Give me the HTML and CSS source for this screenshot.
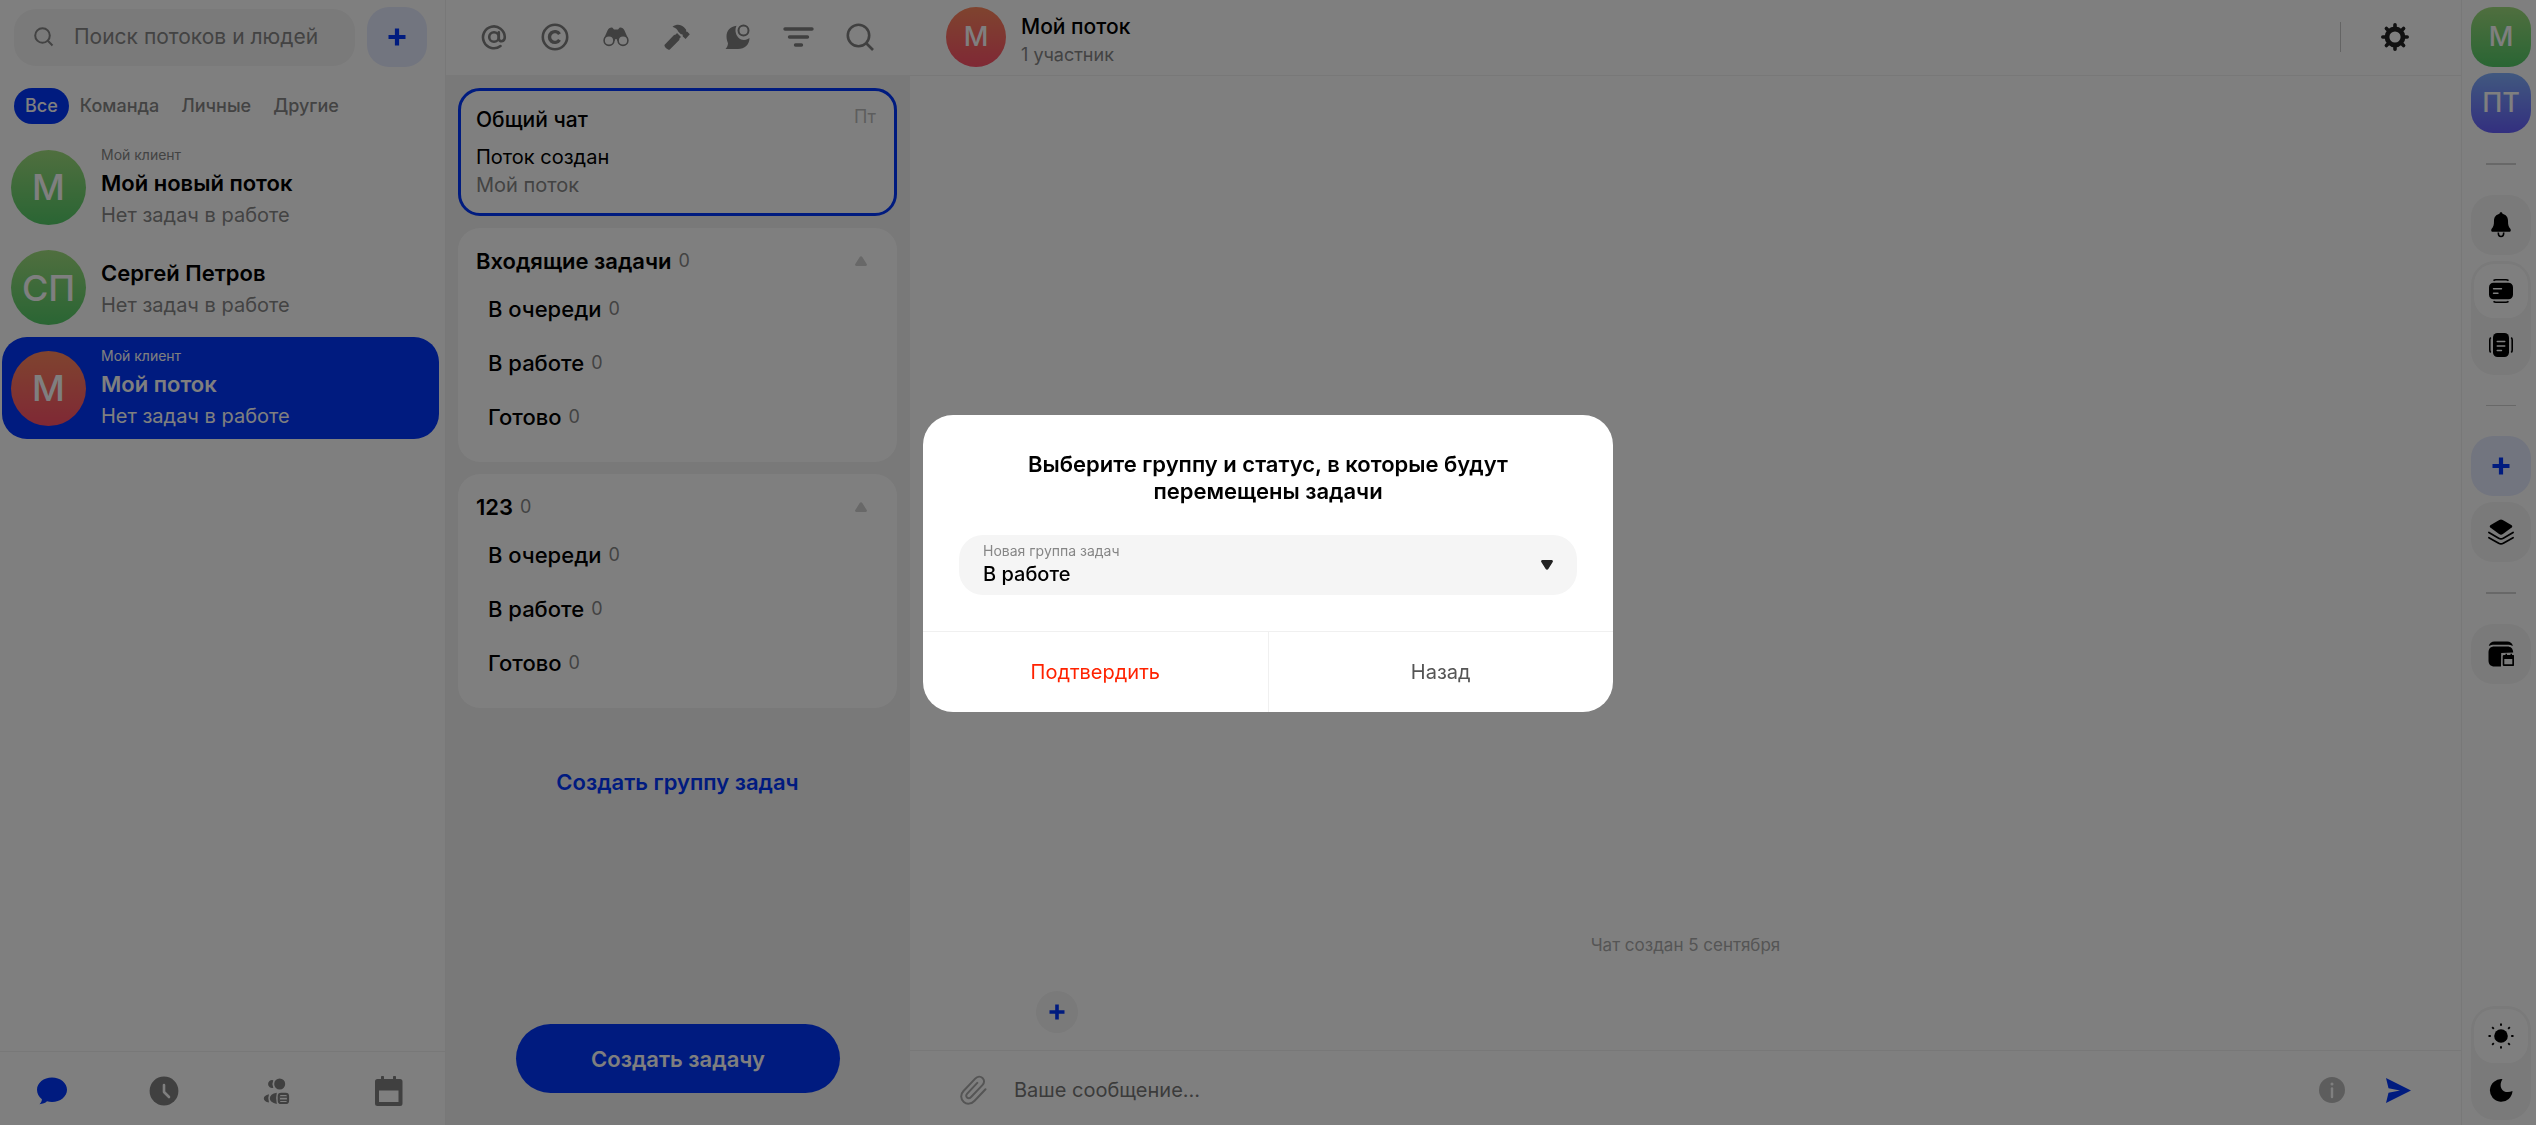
FILE: index.html
```html
<!DOCTYPE html>
<html lang="ru">
<head>
<meta charset="utf-8">
<meta name="viewport" content="width=device-width, initial-scale=1">
<title>Мой поток</title>
<link rel="stylesheet" href="styles.css">
</head>
<body>
<div class="app">

  <aside class="streams">
    <div class="streams-top">
      <label class="search">
        <svg width="20" height="20" viewBox="0 0 20 20" fill="none" stroke="currentColor" stroke-width="2"><circle cx="8.500" cy="8.500" r="7.300"/><path d="M13.800 13.800l4.700 4.700"/></svg>
        <input type="search" placeholder="Поиск потоков и людей" aria-label="Поиск потоков и людей">
      </label>
      <button class="tile tile-accent" aria-label="Добавить">
        <svg width="18" height="18" viewBox="0 0 18 18" fill="none" stroke="currentColor" stroke-width="4.200"><path d="M9 0.500v17M0.500 9h17"/></svg>
      </button>
    </div>
    <div class="tabs">
      <button class="tab tab-on">Все</button>
      <button class="tab">Команда</button>
      <button class="tab">Личные</button>
      <button class="tab">Другие</button>
    </div>
    <nav class="stream-list">
      <a class="stream" href="#new">
        <span class="avatar green">М</span>
        <span class="stream-text"><small>Мой клиент</small><b>Мой новый поток</b><span>Нет задач в работе</span></span>
      </a>
      <a class="stream stream-short" href="#sergey">
        <span class="avatar green">СП</span>
        <span class="stream-text"><b>Сергей Петров</b><span>Нет задач в работе</span></span>
      </a>
      <a class="stream stream-on" href="#stream">
        <span class="avatar red">М</span>
        <span class="stream-text"><small>Мой клиент</small><b>Мой поток</b><span>Нет задач в работе</span></span>
      </a>
    </nav>
    <nav class="bottom-nav">
      <button class="on" aria-label="Чаты">
        <svg width="30" height="28" viewBox="0 0 30 28" fill="currentColor"><path d="M15 0.500C23.300 0.500 30 6 30 12.800S23.300 25 15 25c-1.800 0-3.400-.2-5-.7C8.200 26 5.800 27 2.500 27.200c1.700-1.700 2.400-3.300 2.400-5C1.800 19.900 0 16.600 0 12.800 0 6 6.700.5 15 .5z"/></svg>
      </button>
      <button aria-label="Недавние">
        <svg width="30" height="30" viewBox="0 0 30 30" fill="none"><circle cx="15" cy="15" r="14.400" fill="currentColor"/><path d="M15 9v7l5 5" stroke="#fff" stroke-width="2.600" stroke-linecap="round" stroke-linejoin="round"/></svg>
      </button>
      <button aria-label="Команда">
        <svg width="30" height="30" viewBox="0 0 30 30" fill="currentColor"><path d="M11.300 4.300a4 4 0 1 0 0 7.600q-1.800-3.800 0-7.600z"/><circle cx="17.700" cy="8" r="5.500"/><path d="M7 18.200Q1.800 19.500 1.800 22.400T7 26.500q-1.600-4 0-8.300z"/><path d="M14.800 16.700Q7.800 18 7.800 22.300t7 5.600q-1.400-5.600 0-11.200z"/><rect x="16.800" y="17.800" width="9.200" height="9.200" rx="2.300" fill="none" stroke="currentColor" stroke-width="2.200"/><path d="M18 21h7M18 24.200h7" stroke="currentColor" stroke-width="1.500"/></svg>
      </button>
      <button aria-label="Календарь">
        <svg width="30" height="30" viewBox="0 0 30 30"><path fill="currentColor" fill-rule="evenodd" d="M3.500 3H7V1.200a1.500 1.500 0 0 1 3 0V3h9V1.200a1.500 1.500 0 0 1 3 0V3h4a2.500 2.500 0 0 1 2.500 2.500v22A2.500 2.500 0 0 1 26 30H3.500A2.500 2.500 0 0 1 1 27.500v-22A2.500 2.500 0 0 1 3.500 3zM5 14.500V26h19.500V14.500z"/></svg>
      </button>
    </nav>
  </aside>

  <section class="tasks">
    <div class="toolbar">
      <button aria-label="Упоминания"><svg width="26" height="26" viewBox="0 0 26 26" fill="none" stroke="currentColor" stroke-width="2.600" stroke-linecap="round"><circle cx="13" cy="13" r="4.800"/><path d="M17.800 8.300v6.200c0 3.800 6 3.800 6-1.500A10.900 10.900 0 1 0 19.500 22"/></svg></button>
      <button aria-label="Авторские"><svg width="28" height="28" viewBox="0 0 28 28" fill="none" stroke="currentColor" stroke-width="2.600"><circle cx="14" cy="14" r="12.200"/><path d="M18.500 11.200a5.400 5.400 0 1 0 0 5.600" stroke-width="3.400"/></svg></button>
      <button aria-label="Наблюдение"><svg width="26" height="20" viewBox="0 0 26 20"><path fill="currentColor" d="M1 11.500L4.500 3.500C5.500 1 8 0 9.500.7L11 2.500h4L16.500.7C18 0 20.500 1 21.500 3.500l3.500 8-5 4-5.500-1.500-1-2h-1l-1 2L6 15.500z"/><circle cx="6" cy="13.500" r="4.900" fill="#fff" stroke="currentColor" stroke-width="1.600"/><circle cx="20" cy="13.500" r="4.900" fill="#fff" stroke="currentColor" stroke-width="1.600"/></svg></button>
      <button aria-label="В работе"><svg width="26" height="26" viewBox="0 0 26 26" fill="currentColor"><path d="M8.500 2.800C12.500-.2 17 .3 20 3.200l2 2.200c.3.900.2 1.500 0 2.100l1.400.3 2.400 2.500-4.200 4.700-2.800-2.600-.2-1.900c-1 0-1.500-.2-2.200-.8l-2-2c-.9-2-2.700-3.800-5.900-4.900z"/><path d="M13 9l4 3.900-1.400 1.400-.3 1.800L5.600 25.700c-1.700.4-5.200-2.600-5.200-4.800l9.600-9.800 1.800-.5z"/></svg></button>
      <button aria-label="Непрочитанные"><svg width="26" height="26" viewBox="0 0 26 26"><path fill="currentColor" d="M11.500 1.800C5 2.500 1.500 7 1.500 12.500c0 3 .8 5 1.500 6.700C2.800 21.500 2 23.500.5 25H13c6.700 0 11.400-4.300 11.500-11l-1.700 1c-3 1.500-6.800 1.200-9.300-1.300-3.300-3.300-3.700-8.400-2-11.900z"/><circle cx="18.500" cy="6.500" r="5" fill="none" stroke="currentColor" stroke-width="2"/></svg></button>
      <button aria-label="Фильтр"><svg width="31" height="22" viewBox="0 0 31 22" fill="none" stroke="currentColor" stroke-width="3.400" stroke-linecap="round"><path d="M2 3h27M6.500 11h18M12.500 19h6"/></svg></button>
      <button aria-label="Поиск"><svg width="28" height="28" viewBox="0 0 28 28" fill="none" stroke="currentColor" stroke-width="2.600"><circle cx="12.500" cy="12.500" r="10.700"/><path d="M20 20l7 7"/></svg></button>
    </div>
    <div class="boards">
      <article class="card card-on">
        <div class="card-head"><h2>Общий чат</h2><time>Пт</time></div>
        <p>Поток создан</p>
        <p class="muted">Мой поток</p>
      </article>
      <article class="card group">
        <div class="group-head"><h3>Входящие задачи</h3><span class="count">0</span>
          <button aria-label="Свернуть"><svg width="12" height="10" viewBox="0 0 12 10"><path fill="currentColor" d="M4.700.9a1.500 1.500 0 0 1 2.600 0l4.400 7.200A1.200 1.200 0 0 1 10.700 10H1.300A1.200 1.200 0 0 1 .3 8.100z"/></svg></button></div>
        <ul>
          <li>В очереди<span class="count">0</span></li>
          <li>В работе<span class="count">0</span></li>
          <li>Готово<span class="count">0</span></li>
        </ul>
      </article>
      <article class="card group">
        <div class="group-head"><h3>123</h3><span class="count">0</span>
          <button aria-label="Свернуть"><svg width="12" height="10" viewBox="0 0 12 10"><path fill="currentColor" d="M4.700.9a1.500 1.500 0 0 1 2.600 0l4.400 7.200A1.200 1.200 0 0 1 10.700 10H1.300A1.200 1.200 0 0 1 .3 8.100z"/></svg></button></div>
        <ul>
          <li>В очереди<span class="count">0</span></li>
          <li>В работе<span class="count">0</span></li>
          <li>Готово<span class="count">0</span></li>
        </ul>
      </article>
      <button class="new-group">Создать группу задач</button>
    </div>
    <button class="new-task">Создать задачу</button>
  </section>

  <main class="chat">
    <header class="chat-head">
      <span class="avatar avatar-small red">М</span>
      <div class="chat-title"><h1>Мой поток</h1><p>1 участник</p></div>
      <span class="rule"></span>
      <button class="gear" aria-label="Настройки"><svg width="28" height="28" viewBox="0 0 28 28" fill="none"><circle cx="14" cy="14" r="8" stroke="currentColor" stroke-width="4.800"/><path d="M14 1.800v4M14 22.200v4M1.800 14h4M22.200 14h4M5.400 5.400l2.500 2.500M20.100 20.100l2.500 2.500M5.400 22.600l2.500-2.500M20.100 7.900l2.500-2.500" stroke="currentColor" stroke-width="3.600" stroke-linecap="round"/></svg></button>
    </header>
    <div class="messages">
      <p>Чат создан 5 сентября</p>
      <button aria-label="Добавить"><svg width="16" height="16" viewBox="0 0 16 16" fill="none" stroke="currentColor" stroke-width="3.600"><path d="M8 .5v15M.5 8h15"/></svg></button>
    </div>
    <form class="composer">
      <button type="button" class="clip" aria-label="Прикрепить файл"><svg width="28" height="30" viewBox="0 0 28 30" fill="none" stroke="currentColor" stroke-width="2" stroke-linecap="round"><path d="M26.500 14.300L15.600 25.700c-3.300 3.400-7.600 4-10.800 1.200-3.500-3-3.400-7.600-.3-10.900L16.200 3.600c2.300-2.400 5.300-2.500 7.300-.7 2.200 2 2 5-.1 7.200L12.100 22c-1.400 1.500-3 1.500-4.100.5-1.200-1.100-1-2.600.2-3.900L18.300 7.900"/></svg></button>
      <input type="text" placeholder="Ваше сообщение..." aria-label="Ваше сообщение">
      <button type="button" class="info" aria-label="Информация"><svg width="26" height="26" viewBox="0 0 26 26"><circle cx="13" cy="13" r="13" fill="currentColor"/><path d="M13 11.500v8.500" stroke="#fff" stroke-width="2.400" stroke-linecap="round"/><circle cx="13" cy="7" r="1.500" fill="#fff"/></svg></button>
      <button type="submit" class="send" aria-label="Отправить"><svg width="25" height="25" viewBox="0 0 25 25"><path fill="currentColor" d="M0 0l25 12.500L0 25l2.500-10.200 11.500-2.300L2.500 10.200z"/></svg></button>
    </form>
  </main>

  <aside class="rail">
    <button class="tile letter green">М</button>
    <button class="tile letter violet">ПТ</button>
    <hr>
    <button class="tile" aria-label="Уведомления"><svg width="20" height="26" viewBox="0 0 20 26"><path fill="currentColor" d="M10 .3c.9 0 1.500.6 1.500 1.500 3.300.8 5.500 3.300 5.500 7 0 4 .5 6 2.300 8 1 1.200.5 3-1.200 3H1.900c-1.700 0-2.200-1.800-1.200-3 1.800-2 2.300-4 2.300-8 0-3.700 2.200-6.200 5.500-7 0-.9.600-1.500 1.500-1.500z"/><path d="M7.300 20.500c0 5.400 5.400 5.400 5.400 0" fill="none" stroke="currentColor" stroke-width="1.600"/></svg></button>
    <div class="switch">
      <button class="on" aria-label="Строки"><svg width="24" height="24" viewBox="0 0 24 24"><rect y="3.800" width="24" height="16.400" rx="4.500" fill="currentColor"/><path d="M4.500 1.700Q5.500.8 7 .8h10q1.500 0 2.500.9M4.500 22.300q1 .9 2.500.9h10q1.500 0 2.500-.9" fill="none" stroke="currentColor" stroke-width="1.600"/><path d="M4.500 9.700h8M4.500 14.200h4.500" stroke="#fff" stroke-width="1.400" stroke-linecap="round"/></svg></button>
      <button aria-label="Столбцы"><svg width="24" height="24" viewBox="0 0 24 24"><rect x="4" width="16" height="24" rx="4.500" fill="currentColor"/><path d="M1.700 4.500Q.8 5.500.8 7v10q0 1.500.9 2.500M22.300 4.500q.9 1 .9 2.500v10q0 1.500-.9 2.500" fill="none" stroke="currentColor" stroke-width="1.600"/><path d="M8.200 8.500h7.600M8.200 13h7.600M8.200 17.500h4.300" stroke="#fff" stroke-width="1.400" stroke-linecap="round"/></svg></button>
    </div>
    <hr class="thin">
    <button class="tile tile-accent" aria-label="Добавить"><svg width="18" height="18" viewBox="0 0 18 18" fill="none" stroke="currentColor" stroke-width="4.200"><path d="M9 .5v17M.5 9h17"/></svg></button>
    <button class="tile" aria-label="Слои"><svg width="26" height="26" viewBox="0 0 26 26"><path fill="currentColor" d="M11.300.9q1.700-.9 3.400 0l9 5.400q1.300 1 0 2.100L14.900 15q-1.900 1.300-3.800 0L2.300 8.400q-1.300-1.100 0-2.100z"/><path d="M.9 13.500l9.800 5.800q2.300 1.300 4.600 0l9.800-5.800M.9 18.700l9.800 5.600q2.300 1.300 4.600 0l9.800-5.600" fill="none" stroke="currentColor" stroke-width="1.700" stroke-linecap="round"/></svg></button>
    <hr>
    <button class="tile" aria-label="Архив"><svg width="26" height="26" viewBox="0 0 26 26"><path fill="currentColor" d="M.8 5C1.500 2 3.500.5 6.500.5h12.700c3 0 5 1.500 5.700 4.500-1.700-1-3.300-1.300-5.700-1.300H6.500C4.100 3.700 2.500 4 .8 5zM13 25.500H6.500C2.500 25.500.5 23.300.5 19.500V11.500C.5 7.500 2.500 5.500 6.500 5.500h12.700c3.700 0 5.800 2 6 6l-12 .5z"/><path fill="currentColor" fill-rule="evenodd" d="M16 14h1.500v-1.200h1.500V14h3.500v-1.200H24V14h1q1.300 0 1.300 1.300v8.400Q26 25 24.700 25H16q-1.300 0-1.300-1.300v-8.400Q14.700 14 16 14zm.3 4v5.300h8V18z"/></svg></button>
    <div class="switch switch-end">
      <button class="on" aria-label="Светлая тема"><svg width="26" height="26" viewBox="0 0 26 26"><circle cx="13" cy="13" r="6.800" fill="currentColor"/><path d="M13 .5v2.300M13 23.200v2.300M.5 13h2.300M23.200 13h2.300M4.200 4.200l1.600 1.600M20.200 20.200l1.600 1.600M4.200 21.800l1.600-1.600M20.200 5.800l1.600-1.600" stroke="currentColor" stroke-width="1.900"/></svg></button>
      <button aria-label="Тёмная тема"><svg width="24" height="24" viewBox="0 0 24 24"><path fill="currentColor" d="M13.500 1.200A11.300 11.300 0 1 0 23.500 13c-4.500 2.200-9.500 1-11.200-2.800-1.300-3-.6-6.500 1.200-9z"/></svg></button>
    </div>
  </aside>
</div>

<div class="overlay">
  <div class="modal" role="dialog" aria-modal="true" aria-labelledby="modal-title">
    <h2 id="modal-title">Выберите группу и статус, в которые будут перемещены задачи</h2>
    <div class="field">
      <label for="group">Новая группа задач</label>
      <select id="group"><option>В работе</option><option>В очереди</option><option>Готово</option></select>
      <svg class="arrow" width="12" height="10" viewBox="0 0 12 10"><path fill="currentColor" d="M4.700 9.100a1.500 1.500 0 0 0 2.600 0l4.400-7.200A1.200 1.200 0 0 0 10.700 0H1.300A1.200 1.200 0 0 0 .3 1.900z"/></svg>
    </div>
    <div class="modal-actions">
      <button class="confirm">Подтвердить</button>
      <button>Назад</button>
    </div>
  </div>
</div>
</body>
</html>
```
FILE: styles.css
```css
:root {
  --accent: #0036ff;
  --line: #f0f0f0;
  --soft: #f4f4f4;
  --grey: #868686;
}

* { box-sizing: border-box; margin: 0; padding: 0; }

body {
  font-family: Inter, "Noto Sans", sans-serif;
  font-size: 20px;
  line-height: 28px;
  color: #000;
  background: #fff;
}

button, input, select {
  font: inherit;
  color: inherit;
  background: none;
  border: 0;
  outline: 0;
}
button { display: flex; align-items: center; justify-content: center; }
svg { display: block; flex: none; }
ul { list-style: none; }

.app {
  display: grid;
  grid-template-columns: 445px 465px 1fr 75px;
  min-height: 100vh;
}

.green { background: linear-gradient(#a0de7e, #54cb68); }
.red { background: linear-gradient(#ff885e, #ff516a); }
.violet { background: linear-gradient(#82b1ff, #665fff); }

.avatar {
  display: flex;
  align-items: center;
  justify-content: center;
  flex: none;
  width: 75px;
  height: 75px;
  border-radius: 50%;
  color: #fff;
  font-size: 36px;
  font-weight: 500;
}
.avatar-small { width: 60px; height: 60px; font-size: 27px; }

.tile {
  flex: none;
  width: 60px;
  height: 60px;
  border-radius: 22px;
  background: var(--soft);
}
.tile-accent { background: #e5eaff; color: var(--accent); }
.letter { color: #fff; font-size: 27px; font-weight: 500; }
.letter.green { background: linear-gradient(#a0de7e, #54cb68); }
.letter.violet { background: linear-gradient(#82b1ff, #665fff); }

/* Streams column */
.streams { display: flex; flex-direction: column; }
.streams-top {
  display: flex;
  align-items: center;
  gap: 12px;
  padding: 7px 18px 0 14px;
}
.search {
  display: flex;
  flex: 1;
  align-items: center;
  gap: 20px;
  min-width: 0;
  height: 57px;
  padding: 0 16px 0 20px;
  border-radius: 22px;
  background: var(--soft);
  color: var(--grey);
}
.search input { flex: 1; min-width: 0; font-size: 21px; appearance: none; }
.search input::-webkit-search-cancel-button { display: none; }
input::placeholder { color: var(--grey); opacity: 1; }

.tabs { display: flex; padding: 21px 14px 12px; }
.tab {
  height: 36px;
  padding: 0 11px;
  border-radius: 18px;
  color: var(--grey);
  font-size: 18px;
  font-weight: 500;
}
.tab-on { background: var(--accent); color: #fff; }

.stream-list { flex: 1; padding: 0 6px 0 2px; }
.stream {
  display: flex;
  align-items: center;
  gap: 15px;
  height: 102px;
  padding: 0 9px;
  border-radius: 25px;
  color: #000;
  text-decoration: none;
}
.stream-short { height: 99px; }
.stream-text { display: flex; flex-direction: column; color: var(--grey); padding-top: 1px; font-size: 20px; line-height: 31px; }
.stream-text small { font-size: 14px; line-height: 22px; }
.stream-text b { color: #000; font-size: 22px; font-weight: 600; line-height: 34px; }
.stream-on { background: var(--accent); }
.stream-on .stream-text, .stream-on b { color: #fff; }

.bottom-nav {
  display: flex;
  align-items: center;
  justify-content: space-between;
  height: 74px;
  padding: 4px 41px 0 37px;
  border-top: 1px solid var(--line);
  color: #808080;
}
.bottom-nav .on { color: var(--accent); }

/* Task groups column */
.tasks {
  display: flex;
  flex-direction: column;
  border-left: 1px solid var(--line);
  background: #f2f2f2;
}
.toolbar {
  display: flex;
  height: 75px;
  padding: 0 20px 2px 18px;
  background: #fff;
  color: #808080;
}
.toolbar button { flex: 1; }
.boards {
  display: flex;
  flex: 1;
  flex-direction: column;
  gap: 12px;
  padding: 13px 13px 0 12px;
}
.card { border-radius: 22px; background: #fff; }
.card-on {
  height: 128px;
  padding: 15px 18px 0 15px;
  border: 3px solid var(--accent);
}
.card-head { display: flex; justify-content: space-between; padding-bottom: 9px; }
.card h2 { font-size: 21px; font-weight: 500; }
.card time { color: #bbb; font-size: 18px; line-height: 22px; }
.muted { color: var(--grey); }
.group { padding-bottom: 18px; }
.group-head {
  display: flex;
  align-items: center;
  height: 54px;
  padding: 12px 30px 0 18px;
}
.group-head h3 { font-size: 22px; font-weight: 600; }
.group-head button { margin-left: auto; color: #d0d0d0; }
.count { margin-left: 7px; color: var(--grey); font-size: 18px; font-weight: 400; line-height: 26px; }
.group li {
  display: flex;
  align-items: center;
  height: 54px;
  padding-left: 30px;
  font-size: 22px;
  font-weight: 500;
}
.new-group {
  align-self: center;
  margin-top: 41px;
  height: 42px;
  color: var(--accent);
  font-size: 22px;
  font-weight: 600;
}
.new-task {
  align-self: center;
  width: 324px;
  height: 69px;
  margin-bottom: 32px;
  border-radius: 35px;
  background: var(--accent);
  color: #fff;
  font-size: 22px;
  font-weight: 600;
}

/* Chat */
.chat { display: flex; flex-direction: column; min-width: 0; }
.chat-head {
  display: flex;
  align-items: center;
  height: 76px;
  padding: 0 52px 2px 36px;
  border-bottom: 1px solid var(--line);
}
.chat-title { flex: 1; margin-left: 15px; padding-top: 8px; color: var(--grey); font-size: 18px; }
.chat-title h1 { color: #000; font-size: 21px; font-weight: 500; line-height: 28px; }
.rule { width: 1px; height: 30px; margin-right: 40px; background: #c8c8c8; }
.gear { color: #222; }
.messages {
  display: flex;
  flex: 1;
  flex-direction: column;
  justify-content: flex-end;
  gap: 32px;
  padding: 0 126px 17px;
}
.messages p { color: #aaa; text-align: center; font-size: 17px; }
.messages button {
  width: 42px;
  height: 42px;
  border-radius: 50%;
  background: var(--soft);
  color: var(--accent);
}
.composer {
  display: flex;
  align-items: center;
  height: 75px;
  padding: 4px 50px 0 49px;
  border-top: 1px solid var(--line);
}
.composer input { flex: 1; margin-left: 27px; min-width: 0; }
.composer input::placeholder { color: #777; }
.clip { color: #aaa; }
.info { color: #bbb; margin-right: 41px; }
.send { color: var(--accent); }

/* Right rail */
.rail {
  display: flex;
  flex-direction: column;
  gap: 6px;
  padding: 7px 5px 5px 9px;
  border-left: 1px solid var(--line);
}
.rail hr { width: 30px; height: 2px; margin: 24px 15px; border: 0; background: #d0d0d0; }
.rail hr.thin { height: 1px; }
.switch {
  flex: none;
  width: 60px;
  height: 114px;
  padding: 3px;
  border-radius: 24px;
  background: var(--soft);
}
.switch button { width: 54px; height: 54px; border-radius: 20px; }
.switch .on { background: #fff; }
.switch-end { margin-top: auto; }

/* Dialog */
.overlay {
  position: fixed;
  inset: 0;
  display: flex;
  align-items: center;
  justify-content: center;
  padding-top: 2px;
  background: rgba(0, 0, 0, 0.5);
}
.modal {
  width: 690px;
  border-radius: 30px;
  background: #fff;
  overflow: hidden;
}
.modal h2 {
  padding: 36px 80px 30px;
  text-align: center;
  font-size: 22px;
  font-weight: 600;
  line-height: 27px;
}
.field { position: relative; margin: 0 36px 36px; }
.field label {
  position: absolute;
  top: 6px;
  left: 24px;
  color: var(--grey);
  font-size: 14px;
  line-height: 20px;
}
.field select {
  display: block;
  width: 100%;
  height: 60px;
  padding: 18px 24px 0;
  border-radius: 24px;
  background: #f5f5f5;
  font-weight: 500;
  appearance: none;
}
.field .arrow { position: absolute; top: 25px; right: 24px; color: #222; pointer-events: none; }
.modal-actions { display: flex; border-top: 1px solid var(--line); }
.modal-actions button { flex: 1; height: 80px; color: #555; }
.modal-actions button + button { border-left: 1px solid var(--line); }
.modal-actions .confirm { color: #ff2200; }
```
